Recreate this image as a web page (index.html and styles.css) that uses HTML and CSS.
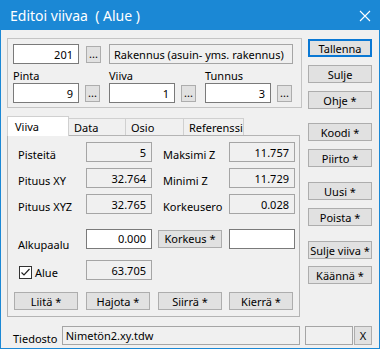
FILE: index.html
```html
<!DOCTYPE html>
<html lang="fi">
<head>
    <meta charset="UTF-8">
    <title>Editoi viivaa</title>
    <link rel="stylesheet" href="styles.css">
</head>
<body>
<div class="window">
    <div class="titlebar">
        <span class="title">Editoi viivaa&nbsp; ( Alue )</span>
        <svg class="close" width="12" height="12" viewBox="0 0 12 12">
            <path d="M1 1 L11 11 M11 1 L1 11" stroke="#fff" stroke-width="1.1" fill="none"/>
        </svg>
    </div>

    <div class="content">
        <div class="main">
            <div class="left">
                <!-- code / pinta / viiva / tunnus -->
                <div class="group">
                    <div class="row">
                        <div class="field num">201</div>
                        <div class="dots">...</div>
                        <div class="field ro text wide">Rakennus (asuin- yms. rakennus)</div>
                    </div>
                    <div class="row">
                        <div class="col">
                            <div class="lbl">Pinta</div>
                            <div class="pick">
                                <div class="field num">9</div>
                                <div class="dots">...</div>
                            </div>
                        </div>
                        <div class="col">
                            <div class="lbl">Viiva</div>
                            <div class="pick">
                                <div class="field num">1</div>
                                <div class="dots">...</div>
                            </div>
                        </div>
                        <div class="col">
                            <div class="lbl">Tunnus</div>
                            <div class="pick">
                                <div class="field num">3</div>
                                <div class="dots">...</div>
                            </div>
                        </div>
                    </div>
                </div>

                <div class="tabs">
                    <div class="tab active tab-viiva">Viiva</div>
                    <div class="tab tab-data">Data</div>
                    <div class="tab tab-osio">Osio</div>
                    <div class="tab tab-ref">Referenssi</div>
                </div>

                <div class="panel">
                    <div class="prow">
                        <div class="plbl">Pisteitä</div>
                        <div class="field ro num">5</div>
                        <div class="plbl right">Maksimi Z</div>
                        <div class="field ro num">11.757</div>
                    </div>
                    <div class="prow gap6">
                        <div class="plbl">Pituus XY</div>
                        <div class="field ro num">32.764</div>
                        <div class="plbl right">Minimi Z</div>
                        <div class="field ro num">11.729</div>
                    </div>
                    <div class="prow gap6">
                        <div class="plbl">Pituus XYZ</div>
                        <div class="field ro num">32.765</div>
                        <div class="plbl right">Korkeusero</div>
                        <div class="field ro num">0.028</div>
                    </div>
                    <div class="prow gap11">
                        <div class="plbl low">Alkupaalu</div>
                        <div class="field num">0.000</div>
                        <div class="btn">Korkeus *</div>
                        <div class="field"></div>
                    </div>
                    <div class="prow gap15">
                        <div class="check">
                            <svg class="box" width="13" height="13" viewBox="0 0 13 13">
                                <rect x="0.5" y="0.5" width="12" height="12" fill="#fff" stroke="#333"/>
                                <path d="M2.5 6.5 L5 9 L10.5 3" stroke="#222" stroke-width="1.2" fill="none"/>
                            </svg>
                            <span>Alue</span>
                        </div>
                        <div class="field ro num">63.705</div>
                    </div>
                    <div class="prow gap12">
                        <div class="btn">Liitä *</div>
                        <div class="btn">Hajota *</div>
                        <div class="btn">Siirrä *</div>
                        <div class="btn">Kierrä *</div>
                    </div>
                </div>
            </div>

            <div class="side">
                <div class="btn default">Tallenna</div>
                <div class="btn m8">Sulje</div>
                <div class="btn m8">Ohje *</div>
                <div class="btn m14">Koodi *</div>
                <div class="btn m8">Piirto *</div>
                <div class="btn m15">Uusi *</div>
                <div class="btn m8">Poista *</div>
                <div class="btn m15">Sulje viiva *</div>
                <div class="btn m7">Käännä *</div>
            </div>
        </div>

        <div class="file-row">
            <div class="file-lbl">Tiedosto</div>
            <div class="field ro text file">Nimetön2.xy.tdw</div>
            <div class="field ro small"></div>
            <div class="btn xbtn">X</div>
        </div>
    </div>
</div>
</body>
</html>
```

FILE: styles.css
```css
body {
  margin: 0;
  font-family: "Noto Sans", sans-serif;
  font-size: 11px;
  color: #000;
}
.window {
  width: 380px;
  height: 349px;
  box-sizing: border-box;
  border: 1px solid #1b88d5;
  background: #f0f0f0;
  display: flex;
  flex-direction: column;
}
.titlebar {
  height: 29px;
  background: #1b88d5;
  color: #fff;
  display: flex;
  align-items: center;
  justify-content: space-between;
  padding: 0 8px 0 9px;
  font-size: 14px;
}
.close {
  display: block;
}
.content {
  padding: 0 7px 0 6px;
}
.main {
  display: flex;
  gap: 6px;
}
.left {
  width: 295px;
  padding-top: 8px;
}
.side {
  width: 64px;
  padding-top: 9px;
  display: flex;
  flex-direction: column;
}

/* fields and buttons */
.field {
  box-sizing: border-box;
  width: 66px;
  height: 20px;
  border: 1px solid #7a7a7a;
  background: #fff;
  padding: 0 5px 0 4px;
  display: flex;
  align-items: center;
  white-space: nowrap;
}
.field.num {
  justify-content: flex-end;
}
.field.ro {
  background: #f0f0f0;
  border-color: #a5a5a5;
}
.dots {
  box-sizing: border-box;
  width: 15px;
  height: 17px;
  border: 1px solid #adadad;
  background: #e1e1e1;
  display: flex;
  align-items: flex-end;
  justify-content: center;
  line-height: 1;
  padding-bottom: 3px;
}
.btn {
  box-sizing: border-box;
  width: 64px;
  height: 18px;
  border: 1px solid #adadad;
  background: #e1e1e1;
  display: flex;
  align-items: center;
  justify-content: center;
  white-space: nowrap;
}
.btn.default {
  border: 2px solid #0a78d4;
}
.m7 { margin-top: 7px; }
.m8 { margin-top: 8px; }
.m14 { margin-top: 14px; }
.m15 { margin-top: 15px; }

/* top group */
.group {
  box-sizing: border-box;
  height: 70px;
  border: 1px solid #c4c4c4;
  padding: 5px 0 0 5px;
}
.row {
  display: flex;
  align-items: center;
  gap: 8px;
}
.row .dots {
  margin-left: -1px;
}
.group > .row:first-child {
  gap: 7px;
}
.group > .row:first-child .dots {
  margin-left: 0;
  margin-right: 1px;
}
.field.wide {
  width: 184px;
}
.col {
  width: 88px;
}
.lbl {
  margin-top: 5px;
  height: 14px;
  line-height: 14px;
  padding-left: 0;
}
.pick {
  display: flex;
  align-items: center;
  gap: 7px;
}

/* tabs */
.tabs {
  display: flex;
  align-items: flex-end;
  height: 19px;
  margin-top: 8px;
  position: relative;
  z-index: 1;
}
.tab {
  box-sizing: border-box;
  height: 17px;
  border: 1px solid #d0d0d0;
  border-bottom: none;
  padding: 1px 0 0 5px;
  line-height: 15px;
  margin-left: -1px;
}
.tab.active {
  height: 20px;
  margin-left: 0;
  margin-bottom: -1px;
  background: #fff;
  padding: 2px 0 0 7px;
}
.tab-viiva { width: 62px; }
.tab-data { width: 58px; }
.tab-osio { width: 59px; }
.tab-ref { width: 61px; }

.panel {
  box-sizing: border-box;
  width: 293px;
  border: 1px solid #b4b4b4;
  padding: 6px 0 6px 6px;
}
.prow {
  display: grid;
  grid-template-columns: 72px 72px 71px 66px;
  align-items: center;
  height: 20px;
}
.prow.gap6 { margin-top: 6px; }
.prow.gap11 { margin-top: 11px; }
.prow.gap15 { margin-top: 15px; }
.prow.gap12 { margin-top: 12px; height: 18px; }
.plbl {
  padding: 4px 0 0 4px;
  white-space: nowrap;
}
.plbl.right {
  padding-left: 5px;
}
.plbl.low {
  padding-top: 12px;
}
.check {
  display: flex;
  align-items: center;
  gap: 3px;
  padding: 5px 0 0 5px;
}
.box {
  display: block;
}

/* file row */
.file-row {
  display: flex;
  align-items: center;
  margin-top: 9px;
  height: 19px;
}
.file-lbl {
  width: 55px;
  padding: 6px 0 0 6px;
  box-sizing: border-box;
}
.field.file {
  width: 240px;
  height: 19px;
  padding-left: 3px;
}
.field.small {
  width: 48px;
  height: 19px;
  margin-left: 5px;
}
.xbtn {
  width: 18px;
  height: 19px;
  margin-left: 1px;
}
```
